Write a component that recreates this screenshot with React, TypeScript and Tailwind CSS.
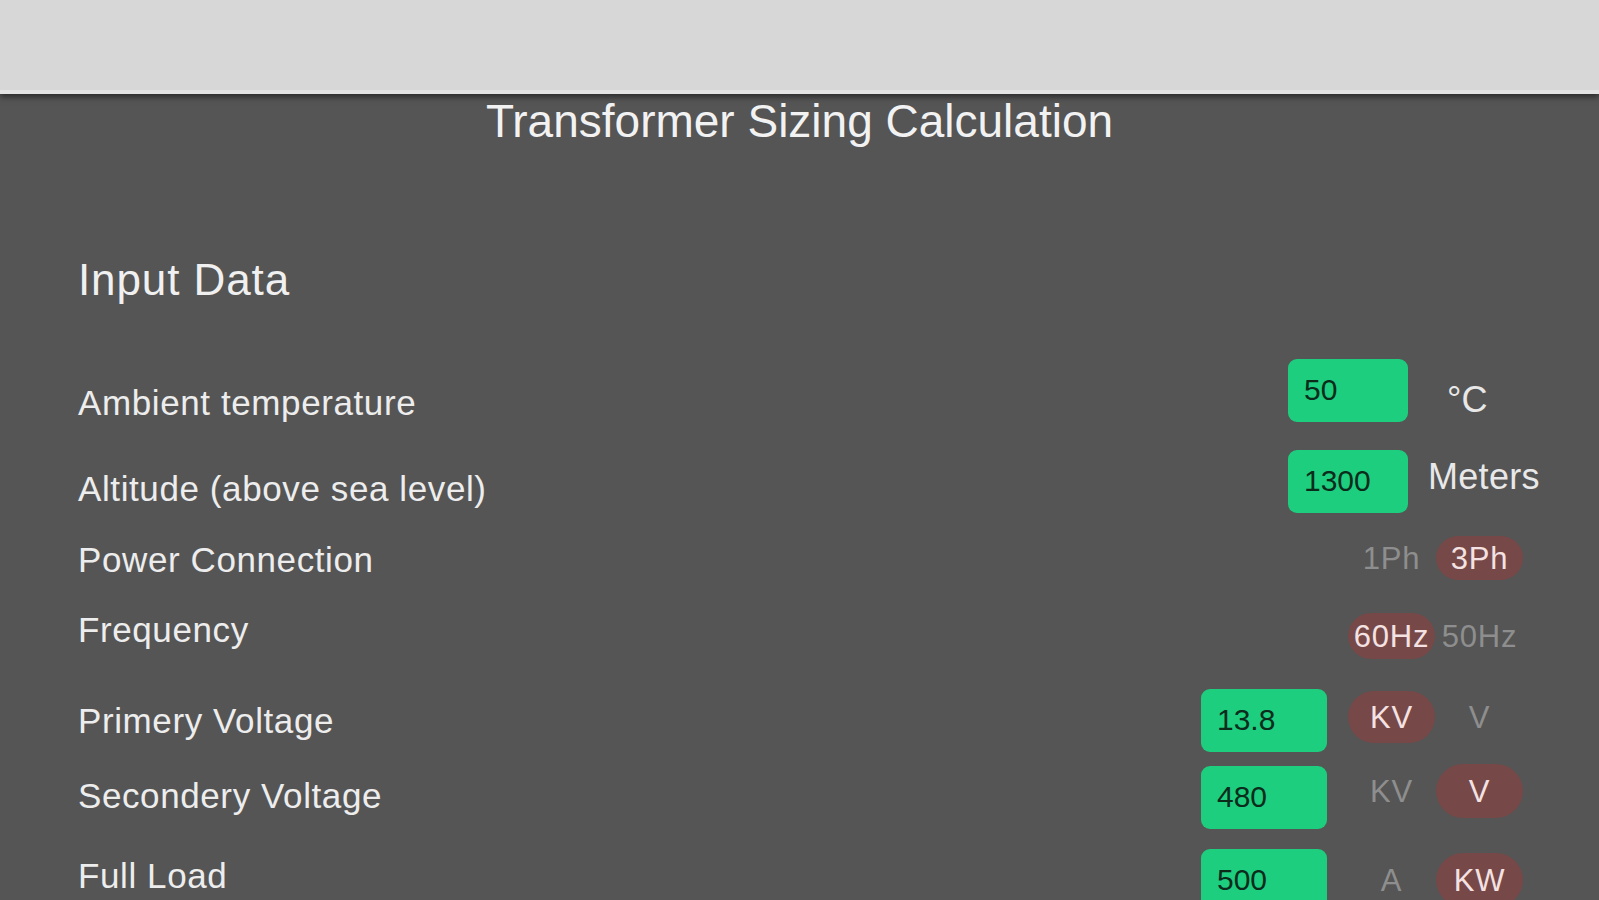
import React from "react";

const font = { fontFamily: '"Liberation Sans", Arial, sans-serif' };

function Label({ text, cls }: { text: string; cls: string }) {
  return (
    <div className={`text-[35px] leading-none tracking-[0.6px] text-[#ededed] whitespace-nowrap ${cls}`}>
      {text}
    </div>
  );
}

function Box({ value, w }: { value: string; w: string }) {
  return (
    <div
      className={`${w} h-[63px] rounded-[9px] bg-[#1ece7f] flex items-center pl-[16px] text-[30px] leading-none text-[#0b2b1b]`}
    >
      {value}
    </div>
  );
}

function Cell({ text, on, h }: { text: string; on: boolean; h: string }) {
  return (
    <div className="w-[87px] flex items-center justify-center">
      <div
        className={`${h} w-[87px] rounded-full flex items-center justify-center text-[31px] leading-none tracking-[0.8px] whitespace-nowrap ${
          on ? "bg-[#774848] text-[#f4e2e2]" : "text-[#8e8e8e]"
        }`}
      >
        {text}
      </div>
    </div>
  );
}

export default function App() {
  return (
    <div className="w-[1599px] h-[900px] overflow-hidden bg-[#555555] flex flex-col" style={font}>
      <div className="relative z-10 h-[94px] bg-[#d7d7d7] border-b-[4px] border-[#e3e3e3] shadow-[0_3px_6px_rgba(0,0,0,0.5)] shrink-0" />
      <div className="mt-[4px] text-center text-[46px] leading-none text-[#f2f2f2]">
        Transformer Sizing Calculation
      </div>
      <div className="mt-[114px] pl-[78px] text-[44px] leading-none tracking-[0.9px] text-[#f0f0f0]">Input Data</div>

      <div className="flex flex-col pl-[78px] pr-[76px]">
        {/* Row 1 */}
        <div className="mt-[56px] h-[64px] flex items-center justify-between">
          <Label text="Ambient temperature" cls="mt-[24px]" />
          <div className="flex items-center">
            <Box value="50" w="w-[120px]" />
            <div className="w-[115px] pl-[39px] mt-[20px] text-[36px] leading-none text-[#e8e8e8] whitespace-nowrap">
              °C
            </div>
          </div>
        </div>
        {/* Row 2 */}
        <div className="mt-[27px] h-[64px] flex items-center justify-between">
          <Label text="Altitude (above sea level)" cls="mt-[14px]" />
          <div className="flex items-center">
            <Box value="1300" w="w-[120px]" />
            <div className="w-[115px] pl-[20px] mb-[8px] text-[36px] leading-none tracking-[0.3px] text-[#e8e8e8] whitespace-nowrap">
              Meters
            </div>
          </div>
        </div>
        {/* Row 3 */}
        <div className="mt-[21px] h-[48px] flex items-center justify-between">
          <Label text="Power Connection" cls="mt-[3px]" />
          <div className="flex items-center gap-[1px]">
            <Cell text="1Ph" on={false} h="h-[44px]" />
            <Cell text="3Ph" on={true} h="h-[44px]" />
          </div>
        </div>
        {/* Row 4 */}
        <div className="mt-[30px] h-[48px] flex items-center justify-between">
          <Label text="Frequency" cls="mb-[14px]" />
          <div className="flex items-center gap-[1px]">
            <Cell text="60Hz" on={true} h="h-[46px]" />
            <Cell text="50Hz" on={false} h="h-[46px]" />
          </div>
        </div>
        {/* Row 5 */}
        <div className="mt-[28px] h-[64px] flex items-center justify-between">
          <Label text="Primery Voltage" cls="" />
          <div className="flex items-center">
            <Box value="13.8" w="w-[126px]" />
            <div className="ml-[21px] flex items-center gap-[1px] mb-[6px]">
              <Cell text="KV" on={true} h="h-[52px]" />
              <Cell text="V" on={false} h="h-[52px]" />
            </div>
          </div>
        </div>
        {/* Row 6 */}
        <div className="mt-[13px] h-[64px] flex items-center justify-between">
          <Label text="Secondery Voltage" cls="mb-[4px]" />
          <div className="flex items-center">
            <Box value="480" w="w-[126px]" />
            <div className="ml-[21px] flex items-center gap-[1px] mb-[12px]">
              <Cell text="KV" on={false} h="h-[54px]" />
              <Cell text="V" on={true} h="h-[54px]" />
            </div>
          </div>
        </div>
        {/* Row 7 */}
        <div className="mt-[19px] h-[64px] flex items-center justify-between">
          <Label text="Full Load" cls="mb-[10px]" />
          <div className="flex items-center">
            <Box value="500" w="w-[126px]" />
            <div className="ml-[21px] flex items-center gap-[1px]">
              <Cell text="A" on={false} h="h-[54px]" />
              <Cell text="KW" on={true} h="h-[54px]" />
            </div>
          </div>
        </div>
      </div>
    </div>
  );
}
